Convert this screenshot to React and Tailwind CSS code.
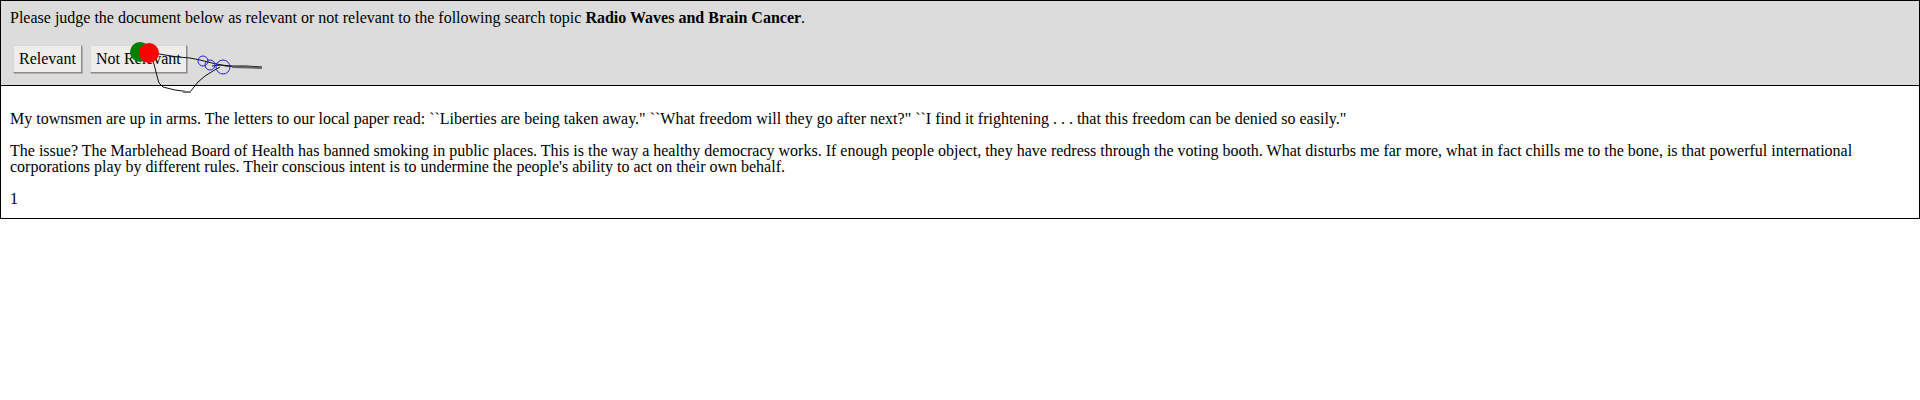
import React from 'react';

const serif = { fontFamily: '"Liberation Serif", "Times New Roman", Times, serif' };

function JudgeButton({ children }) {
  return (
    <button className="h-[28px] px-[5px] bg-[#efedea] border border-t-[#d8d8d8] border-l-[#d8d8d8] border-r-[#8a8a8a] border-b-[#8a8a8a] shadow-[1px_1px_0_#b0b0b0] text-[16px] leading-[18px] text-black">
      {children}
    </button>
  );
}

// mouse trail drawn on top of the page
function MouseTrail() {
  return (
    <svg className="absolute left-0 top-0 pointer-events-none" width="300" height="110" viewBox="0 0 300 110">
      <polyline
        points="149,52 165,55 178,57 190,58 200,60 212,63 226,66 245,67 262,68"
        fill="none"
        stroke="#111"
        strokeWidth="1"
      />
      <polyline
        points="262,67 246,66 232,66 220,65 212,66"
        fill="none"
        stroke="#111"
        strokeWidth="1"
      />
      <line x1="232" y1="67" x2="262" y2="68" stroke="#666" strokeWidth="2" />
      <polyline
        points="150,55 154,64 157,76 159,83 163,87 175,90 190,92 194,87 198,82 205,76 213,71 220,67"
        fill="none"
        stroke="#111"
        strokeWidth="1"
      />
      <line x1="183" y1="92" x2="191" y2="92" stroke="#777" strokeWidth="2" />
      <circle cx="203" cy="61" r="5" fill="none" stroke="#2222dd" strokeWidth="1" />
      <circle cx="210" cy="65" r="5" fill="none" stroke="#2222dd" strokeWidth="1" />
      <circle cx="223" cy="67" r="7" fill="none" stroke="#2222dd" strokeWidth="1" />
      <circle cx="140" cy="52" r="10" fill="#008000" />
      <circle cx="149" cy="53" r="10" fill="#ff0000" />
    </svg>
  );
}

export default function App() {
  return (
    <div className="relative bg-white text-black text-[16px]" style={serif}>
      <div className="border border-black">
        {/* Header */}
        <div className="bg-[#dcdcdc] border-b border-black pl-[9px] pt-[8px] pb-[12px]">
          <p className="leading-[18px]">
            Please judge the document below as relevant or not relevant to the following search topic{' '}
            <b>Radio Waves and Brain Cancer</b>.
          </p>
          <div className="flex gap-[8px] mt-[18px] ml-[3px]">
            <JudgeButton>Relevant</JudgeButton>
            <JudgeButton>Not Relevant</JudgeButton>
          </div>
        </div>

        {/* Document */}
        <div className="pl-[9px] pr-[9px] pt-[25px] pb-[11px] leading-[16px]">
          <p>
            My townsmen are up in arms. The letters to our local paper read: ``Liberties are being taken away.&quot; ``What freedom will they go after next?&quot; ``I find it frightening . . . that this freedom can be denied so easily.&quot;
          </p>
          <p className="mt-[16px]">
            The issue? The Marblehead Board of Health has banned smoking in public places. This is the way a healthy democracy works. If enough people object, they have redress through the voting booth. What disturbs me far more, what in fact chills me to the bone, is that powerful international corporations play by different rules. Their conscious intent is to undermine the people's ability to act on their own behalf.
          </p>
          <p className="mt-[16px]">1</p>
        </div>
      </div>
      <MouseTrail />
    </div>
  );
}
